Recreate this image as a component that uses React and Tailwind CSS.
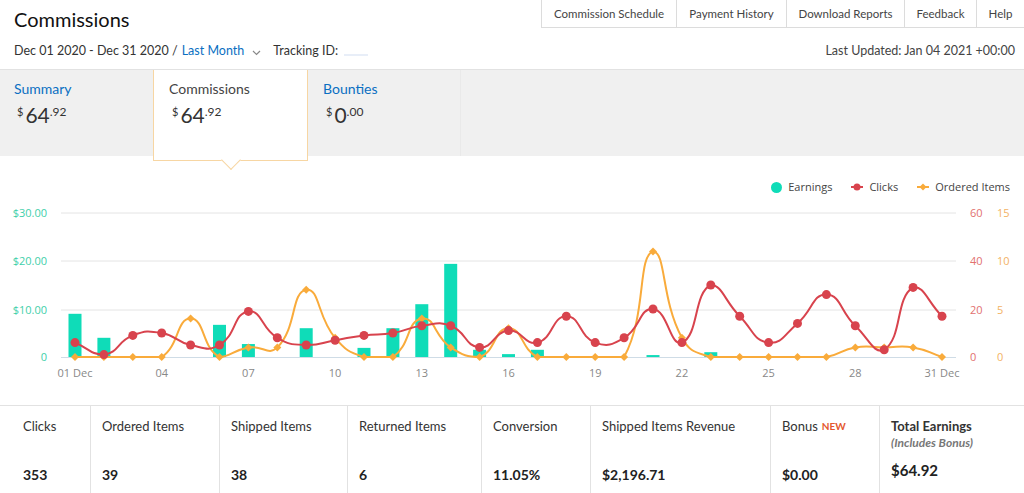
import React from "react";

const navItems = [
  { label: "Commission Schedule", w: "w-[135px]" },
  { label: "Payment History", w: "w-[110px]" },
  { label: "Download Reports", w: "w-[118px]" },
  { label: "Feedback", w: "w-[72px]" },
  { label: "Help", w: "w-[47px]" },
];

const earnings = [9, 4, 0, 0, 0, 6.7, 2.7, 0, 6, 0, 1.9, 6, 11, 19.4, 1.5, 0.6, 1.5, 0, 0, 0, 0.4, 0, 1, 0, 0, 0, 0, 0, 0, 0, 0];
const clicks = [6, 1, 9, 10, 5, 5, 19, 8, 5, 7, 9, 10, 13, 13, 4, 11, 6, 17, 6, 8, 20, 6, 30, 17, 6, 14, 26, 13, 3, 29, 17];
const ordered = [0, 0, 0, 0, 4, 0, 1, 1, 7, 2, 0, 0, 4, 1, 0, 3, 0, 0, 0, 0, 11, 2, 0, 0, 0, 0, 0, 1, 1, 1, 0];

const X0 = 75;
const DX = 28.9;
const BASE = 157;
const xOf = (i) => X0 + i * DX;

const TEAL = "#0fdcb8";
const RED = "#d8434d";
const ORANGE = "#f9ab3b";

// smooth line like echarts, control points kept inside the data box
function smoothPath(pts, smooth = 0.5) {
  const ys = pts.map((p) => p[1]);
  const minY = Math.min(...ys);
  const maxY = Math.max(...ys);
  const clamp = (y) => Math.min(maxY, Math.max(minY, y));
  const cps = pts.map((p, i) => {
    const prev = pts[i - 1] || p;
    const next = pts[i + 1] || p;
    const vx = (next[0] - prev[0]) * smooth;
    const vy = (next[1] - prev[1]) * smooth;
    const d0 = Math.hypot(p[0] - prev[0], p[1] - prev[1]);
    const d1 = Math.hypot(next[0] - p[0], next[1] - p[1]);
    const sum = d0 + d1 || 1;
    return {
      inn: [p[0] - vx * (d0 / sum), clamp(p[1] - vy * (d0 / sum))],
      out: [p[0] + vx * (d1 / sum), clamp(p[1] + vy * (d1 / sum))],
    };
  });
  let d = `M${pts[0][0]},${pts[0][1]}`;
  for (let i = 1; i < pts.length; i++) {
    d += ` C${cps[i - 1].out[0]},${cps[i - 1].out[1]} ${cps[i].inn[0]},${cps[i].inn[1]} ${pts[i][0]},${pts[i][1]}`;
  }
  return d;
}

function Money({ whole, cents }) {
  return (
    <div className="flex items-start text-[#333]">
      <span className="text-[11px] leading-[13px] mr-[2px]">$</span>
      <span className="text-[21px] leading-[20px]">{whole}</span>
      <span className="text-[12px] leading-[13px]">.{cents}</span>
    </div>
  );
}

function Chart() {
  const clickPts = clicks.map((v, i) => [xOf(i), BASE - v * 2.4]);
  const orderPts = ordered.map((v, i) => [xOf(i), BASE - v * 9.6]);
  const grid = [13, 61, 110];
  const xLabels = [
    [0, "01 Dec"], [3, "04"], [6, "07"], [9, "10"], [12, "13"], [15, "16"],
    [18, "19"], [21, "22"], [24, "25"], [27, "28"], [30, "31 Dec"],
  ];
  const leftLabels = [["$30.00", 13], ["$20.00", 61], ["$10.00", 110], ["0", 157]];
  const redLabels = [["60", 13], ["40", 61], ["20", 110], ["0", 157]];
  const orangeLabels = [["15", 13], ["10", 61], ["5", 110], ["0", 157]];

  return (
    <svg width="1024" height="205" viewBox="0 0 1024 205" className="block" style={{ fontFamily: "'Open Sans', sans-serif" }}>
      {grid.map((y) => (
        <line key={y} x1="61" x2="956" y1={y} y2={y} stroke="#e4e4e4" strokeWidth="1" />
      ))}
      <line x1="61" x2="956" y1={BASE + 0.5} y2={BASE + 0.5} stroke="#cfdce6" strokeWidth="1" />
      {leftLabels.map(([t, y]) => (
        <text key={t} x="47" y={y + 4} textAnchor="end" fontSize="11" fill="#3fcfaa">{t}</text>
      ))}
      {redLabels.map(([t, y]) => (
        <text key={t} x="970" y={y + 4} fontSize="11" fill="#e2716f">{t}</text>
      ))}
      {orangeLabels.map(([t, y]) => (
        <text key={t} x="997" y={y + 4} fontSize="11" fill="#f3b264">{t}</text>
      ))}
      {xLabels.map(([i, t]) => (
        <text key={t} x={xOf(i)} y="177" textAnchor="middle" fontSize="11" fill="#888">{t}</text>
      ))}
      {earnings.map((v, i) =>
        v > 0 ? (
          <rect key={i} x={xOf(i) - 6.5} y={BASE - v * 4.8} width="13" height={v * 4.8} fill={TEAL} />
        ) : null
      )}
      <path d={smoothPath(orderPts)} fill="none" stroke={ORANGE} strokeWidth="2" />
      <path d={smoothPath(clickPts)} fill="none" stroke={RED} strokeWidth="2" />
      {orderPts.map(([x, y], i) => (
        <polygon key={i} points={`${x},${y - 4} ${x + 4},${y} ${x},${y + 4} ${x - 4},${y}`} fill={ORANGE} />
      ))}
      {clickPts.map(([x, y], i) => (
        <circle key={i} cx={x} cy={y} r="4.5" fill={RED} />
      ))}
    </svg>
  );
}

function LegendMark({ color, diamond }) {
  return (
    <svg width="12" height="10" viewBox="0 0 12 10">
      <line x1="0" x2="12" y1="5" y2="5" stroke={color} strokeWidth="2" />
      {diamond ? (
        <polygon points="6,1.5 9.5,5 6,8.5 2.5,5" fill={color} />
      ) : (
        <circle cx="6" cy="5" r="3.5" fill={color} />
      )}
    </svg>
  );
}

const stats = [
  { label: "Clicks", value: "353", w: "w-[91px]", pl: "pl-[23px]" },
  { label: "Ordered Items", value: "39", w: "w-[129px]" },
  { label: "Shipped Items", value: "38", w: "w-[128px]" },
  { label: "Returned Items", value: "6", w: "w-[134px]" },
  { label: "Conversion", value: "11.05%", w: "w-[109px]" },
  { label: "Shipped Items Revenue", value: "$2,196.71", w: "w-[180px]" },
  { label: "Bonus", value: "$0.00", w: "w-[109px]", isNew: true },
];

export default function App() {
  return (
    <div className="w-[1024px] h-[493px] overflow-hidden bg-white text-[#333]" style={{ fontFamily: "Lato, 'Open Sans', sans-serif" }}>
      {/* header */}
      <div className="flex justify-between h-[36px]">
        <h1 className="pl-[14px] pt-[5px] text-[20px] leading-[28px] text-[#111]">Commissions</h1>
        <div className="flex h-[28px] border-l border-b border-[#dcdcdc]">
          {navItems.map((n, i) => (
            <div
              key={n.label}
              className={`${n.w} flex items-center justify-center text-[11.5px] text-[#444] ${i < navItems.length - 1 ? "border-r border-[#dcdcdc]" : ""}`}
            >
              {n.label}
            </div>
          ))}
        </div>
      </div>
      <div className="flex items-center justify-between h-[33px] pl-[14px] pr-[9px] pb-[2px] text-[12.5px] text-[#333]">
        <div className="flex items-center">
          <span>Dec 01 2020 - Dec 31 2020 /</span>
          <span className="ml-[4px] text-[#0a6fc2]">Last Month</span>
          <svg className="ml-[8px] mt-[3px]" width="9" height="6" viewBox="0 0 9 6">
            <path d="M1 1 L4.5 4.5 L8 1" fill="none" stroke="#888" strokeWidth="1.2" />
          </svg>
          <span className="ml-[12px]">Tracking ID:</span>
          <span className="ml-[6px] mt-[6px] w-[24px] h-[2px] bg-[#e8eef8]" />
        </div>
        <div className="text-[#444]">Last Updated: Jan 04 2021 +00:00</div>
      </div>

      {/* tabs band */}
      <div className="flex h-[87px] border-t border-[#e2e2e2] bg-[#f0f0f0]">
        <div className="w-[153px] pl-[14px] pt-[11px]">
          <div className="text-[14px] leading-[16px] text-[#0a6fc2]">Summary</div>
          <div className="mt-[8px] pl-[3px]">
            <Money whole="64" cents="92" />
          </div>
        </div>
        <div className="relative z-10 w-[155px] h-[91px] self-start bg-white border-x border-b border-[#f7d6a3] pl-[15px] pt-[11px]">
          <div className="text-[14px] leading-[16px] text-[#444]">Commissions</div>
          <div className="mt-[8px] pl-[3px]">
            <Money whole="64" cents="92" />
          </div>
          <div className="absolute left-1/2 -bottom-[7px] w-[14px] h-[14px] -translate-x-1/2 rotate-45 bg-white border-r border-b border-[#f7d6a3]" />
        </div>
        <div className="w-[153px] pl-[15px] pt-[11px] border-r border-[#e9e9e9]">
          <div className="text-[14px] leading-[16px] text-[#0a6fc2]">Bounties</div>
          <div className="mt-[8px] pl-[3px]">
            <Money whole="0" cents="00" />
          </div>
        </div>
      </div>

      {/* chart */}
      <div className="h-[249px]">
        <div className="flex justify-end items-start h-[44px] pt-[24px] pr-[14px] text-[11px] leading-[14px] text-[#444]" style={{ fontFamily: "'Open Sans', sans-serif" }}>
          <div className="flex items-center gap-[6px]">
            <span className="w-[11px] h-[11px] rounded-full" style={{ background: TEAL }} />
            <span>Earnings</span>
          </div>
          <div className="flex items-center gap-[6px] ml-[19px]">
            <LegendMark color={RED} />
            <span>Clicks</span>
          </div>
          <div className="flex items-center gap-[6px] ml-[19px]">
            <LegendMark color={ORANGE} diamond />
            <span>Ordered Items</span>
          </div>
        </div>
        <Chart />
      </div>

      {/* stats */}
      <div className="flex h-[88px] border-t border-[#e2e2e2]">
        {stats.map((s) => (
          <div key={s.label} className={`${s.w} ${s.pl || "pl-[11px]"} pt-[12px] border-r border-[#e2e2e2] flex flex-col`}>
            <div className="text-[13px] leading-[16px] text-[#333]">
              {s.label}
              {s.isNew && <span className="ml-[4px] align-top text-[10px] font-bold text-[#e4572e]">NEW</span>}
            </div>
            <div className="mt-[32px] text-[14px] leading-[18px] font-bold text-[#222]">{s.value}</div>
          </div>
        ))}
        <div className="flex-1 pl-[11px] pt-[12px]">
          <div className="text-[13px] leading-[16px] font-bold text-[#333]">Total Earnings</div>
          <div className="mt-[2px] text-[12px] leading-[14px] italic font-bold text-[#777]">(Includes Bonus)</div>
          <div className="mt-[11px] text-[15px] leading-[18px] font-bold text-[#222]">$64.92</div>
        </div>
      </div>
    </div>
  );
}
